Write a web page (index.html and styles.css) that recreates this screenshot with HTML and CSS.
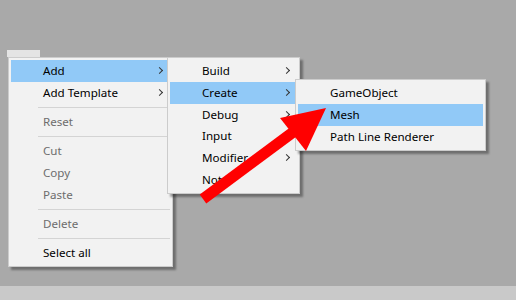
FILE: index.html
```html
<!DOCTYPE html>
<html lang="en">
<head>
    <meta charset="UTF-8">
    <meta name="viewport" content="width=device-width, initial-scale=1.0">
    <title>Context Menu</title>
    <link rel="stylesheet" href="styles.css">
</head>
<body>
    <div class="canvas">
        <div class="cell"></div>

        <!-- Menu principal -->
        <div class="menu menu-main">
            <div class="item active">Add<span class="arrow"></span></div>
            <div class="item">Add Template<span class="arrow"></span></div>
            <div class="sep"></div>
            <div class="item disabled">Reset</div>
            <div class="sep"></div>
            <div class="item disabled">Cut</div>
            <div class="item disabled">Copy</div>
            <div class="item disabled">Paste</div>
            <div class="sep"></div>
            <div class="item disabled">Delete</div>
            <div class="sep"></div>
            <div class="item">Select all</div>
        </div>

        <!-- Submenu Add -->
        <div class="menu menu-add">
            <div class="item">Build<span class="arrow"></span></div>
            <div class="item active">Create<span class="arrow"></span></div>
            <div class="item">Debug<span class="arrow"></span></div>
            <div class="item">Input<span class="arrow"></span></div>
            <div class="item">Modifier<span class="arrow"></span></div>
            <div class="item">Note</div>
        </div>

        <!-- Submenu Create -->
        <div class="menu menu-create">
            <div class="item">GameObject</div>
            <div class="item active">Mesh</div>
            <div class="item">Path Line Renderer</div>
        </div>

        <svg class="pointer" width="516" height="300" viewBox="0 0 516 300">
            <line x1="203" y1="199" x2="300" y2="127" stroke="#ff0000" stroke-width="11"/>
            <polygon points="326,108 280,118 306,151" fill="#ff0000"/>
        </svg>
    </div>
    <div class="footer"></div>
</body>
</html>
```

FILE: styles.css
```css
body {
    margin: 0;
    padding: 0;
    width: 516px;
    height: 300px;
    overflow: hidden;
    background-color: #a9a9a9;
    font-family: "Noto Sans", "Open Sans", sans-serif;
    font-size: 11.6px;
    color: #000;
}
.canvas {
    position: relative;
    height: 286px;
}
.footer {
    height: 14px;
    background-color: #c9c9c9;
}
.cell {
    position: absolute;
    left: 7px;
    top: 50px;
    width: 33px;
    height: 7px;
    background-color: #e4e4e4;
}
.menu {
    position: absolute;
    display: flex;
    flex-direction: column;
    box-sizing: border-box;
    padding: 2px;
    background-color: #f2f2f2;
    border: 1px solid #cccccc;
    box-shadow: 3px 3px 2px rgba(0, 0, 0, 0.35);
}
.menu-main {
    left: 8px;
    top: 57px;
    width: 165px;
    height: 210px;
}
.menu-add {
    left: 167px;
    top: 57px;
    width: 133px;
    height: 137px;
}
.menu-create {
    left: 295px;
    top: 79px;
    width: 191px;
    height: 72px;
}
.item {
    position: relative;
    height: 22px;
    line-height: 21px;
    padding-left: 32px;
    white-space: nowrap;
}
.item.active {
    background-color: #91c9f7;
}
.item.disabled {
    color: #6d6d6d;
}
.arrow {
    position: absolute;
    right: 8px;
    top: 8px;
    width: 4px;
    height: 4px;
    border-top: 1px solid #333;
    border-right: 1px solid #333;
    transform: rotate(45deg);
}
.sep {
    flex: none;
    height: 1px;
    margin: 3px 0 3px 27px;
    background-color: #d4d4d4;
}
.pointer {
    position: absolute;
    left: 0;
    top: 0;
}
```
